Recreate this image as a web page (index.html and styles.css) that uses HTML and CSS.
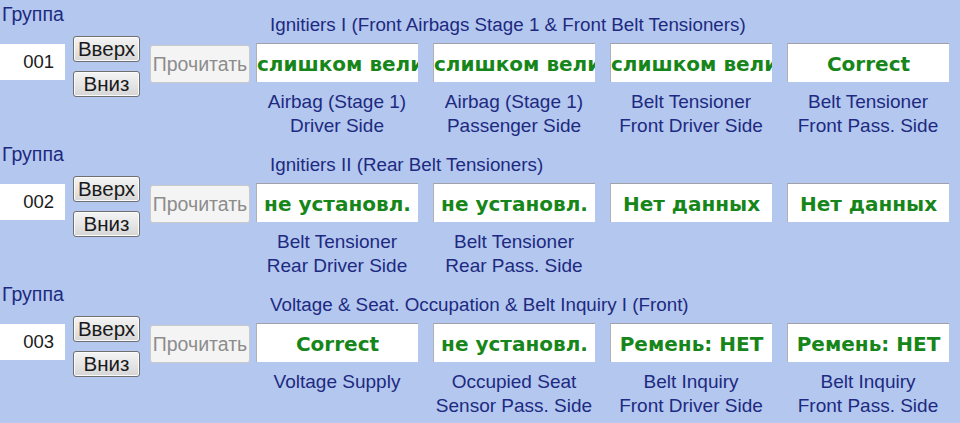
FILE: index.html
```html
<!DOCTYPE html>
<html lang="ru">
<head>
<meta charset="utf-8">
<title>Группы</title>
<link rel="stylesheet" href="styles.css">
</head>
<body>
<div class="page">

  <section class="group">
    <div class="head">
      <div class="grp">Группа</div>
      <div class="title">Ignitiers I (Front Airbags Stage 1 &amp; Front Belt Tensioners)</div>
    </div>
    <div class="body">
      <div class="num">001</div>
      <div class="updown"><button class="btn">Вверх</button><button class="btn">Вниз</button></div>
      <button class="read" disabled>Прочитать</button>
      <div class="fields">
        <div class="cell"><div class="val">слишком велико</div><div class="lab">Airbag (Stage 1)<br>Driver Side</div></div>
        <div class="cell"><div class="val">слишком велико</div><div class="lab">Airbag (Stage 1)<br>Passenger Side</div></div>
        <div class="cell"><div class="val">слишком велико</div><div class="lab">Belt Tensioner<br>Front Driver Side</div></div>
        <div class="cell"><div class="val">Correct</div><div class="lab">Belt Tensioner<br>Front Pass. Side</div></div>
      </div>
    </div>
  </section>

  <section class="group">
    <div class="head">
      <div class="grp">Группа</div>
      <div class="title">Ignitiers II (Rear Belt Tensioners)</div>
    </div>
    <div class="body">
      <div class="num">002</div>
      <div class="updown"><button class="btn">Вверх</button><button class="btn">Вниз</button></div>
      <button class="read" disabled>Прочитать</button>
      <div class="fields">
        <div class="cell"><div class="val">не установл.</div><div class="lab">Belt Tensioner<br>Rear Driver Side</div></div>
        <div class="cell"><div class="val">не установл.</div><div class="lab">Belt Tensioner<br>Rear Pass. Side</div></div>
        <div class="cell"><div class="val">Нет данных</div><div class="lab"></div></div>
        <div class="cell"><div class="val">Нет данных</div><div class="lab"></div></div>
      </div>
    </div>
  </section>

  <section class="group">
    <div class="head">
      <div class="grp">Группа</div>
      <div class="title">Voltage &amp; Seat. Occupation &amp; Belt Inquiry I (Front)</div>
    </div>
    <div class="body">
      <div class="num">003</div>
      <div class="updown"><button class="btn">Вверх</button><button class="btn">Вниз</button></div>
      <button class="read" disabled>Прочитать</button>
      <div class="fields">
        <div class="cell"><div class="val">Correct</div><div class="lab">Voltage Supply</div></div>
        <div class="cell"><div class="val">не установл.</div><div class="lab">Occupied Seat<br>Sensor Pass. Side</div></div>
        <div class="cell"><div class="val">Ремень: НЕТ</div><div class="lab">Belt Inquiry<br>Front Driver Side</div></div>
        <div class="cell"><div class="val">Ремень: НЕТ</div><div class="lab">Belt Inquiry<br>Front Pass. Side</div></div>
      </div>
    </div>
  </section>

</div>
</body>
</html>
```
FILE: styles.css
```css
html, body {
  margin: 0;
  padding: 0;
  background: #b4c7ef;
}
body {
  font-family: "Liberation Sans", Arial, sans-serif;
  color: #1d2a80;
  width: 960px;
  height: 423px;
  overflow: hidden;
}
.page {
  display: flex;
  flex-direction: column;
}
.group {
  height: 140px;
  display: flex;
  flex-direction: column;
}
.head {
  display: flex;
  height: 36px;
}
.grp {
  width: 268px;
  padding-left: 2px;
  padding-top: 3px;
  font-size: 19.5px;
  line-height: 22px;
}
.title {
  padding-top: 14px;
  font-size: 18.8px;
  line-height: 22px;
}
.body {
  display: flex;
  align-items: flex-start;
}
.num {
  width: 54px;
  height: 36px;
  margin-top: 8px;
  padding-right: 11px;
  background: #fff;
  color: #1a1a1a;
  text-align: right;
  font-size: 18.5px;
  line-height: 36px;
}
.updown {
  display: flex;
  flex-direction: column;
  gap: 9px;
  margin-left: 8px;
}
.btn {
  width: 67px;
  height: 26px;
  padding: 0;
  border: 1px solid #6f6f6f;
  border-radius: 3px;
  background: linear-gradient(#f4f4f4, #e6e6e6 50%, #d6d6d6);
  font-family: "Liberation Sans", Arial, sans-serif;
  font-size: 20.5px;
  line-height: 22px;
  color: #1a1a1a;
  box-shadow: inset 0 0 0 1px #fbfbfb;
}
.read {
  width: 100px;
  height: 38px;
  margin-top: 9px;
  margin-left: 10px;
  padding: 0;
  border: 1px solid #c9c9c9;
  border-radius: 3px;
  background: #f4f4f4;
  color: #8c8c8c;
  font-family: "Liberation Sans", Arial, sans-serif;
  font-size: 19.5px;
}
.fields {
  display: flex;
  gap: 15px;
  margin-left: 6px;
  margin-top: 7px;
}
.cell {
  width: 162px;
  display: flex;
  flex-direction: column;
}
.val {
  height: 39px;
  background: #fff;
  border-top: 1px solid #a0a0a8;
  border-left: 1px solid #b0b0b8;
  box-sizing: border-box;
  overflow: hidden;
  white-space: nowrap;
  text-align: center;
  font-family: "DejaVu Sans", Verdana, sans-serif;
  font-weight: bold;
  font-size: 20px;
  line-height: 40px;
  color: #17861a;
}
.lab {
  margin-top: 8px;
  text-align: center;
  font-size: 19px;
  line-height: 24px;
}
```
